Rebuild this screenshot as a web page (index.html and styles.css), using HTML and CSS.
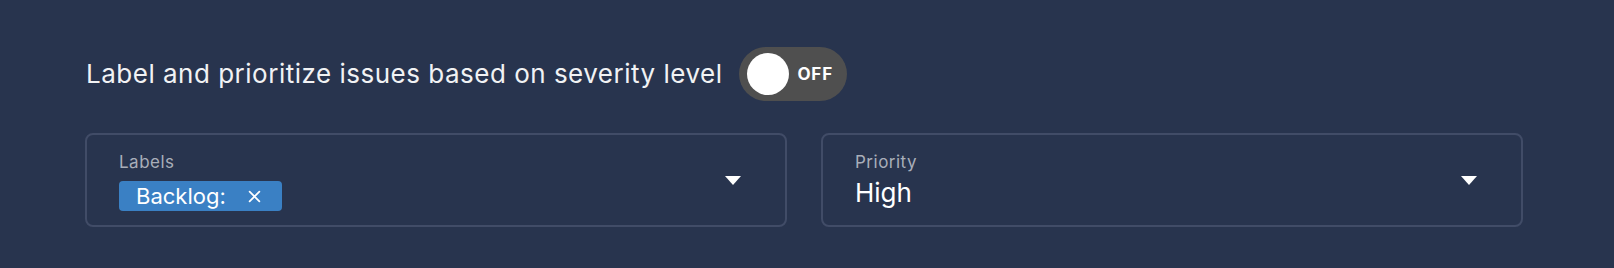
FILE: index.html
```html
<!DOCTYPE html>
<html lang="en">
<head>
<meta charset="utf-8">
<title>Severity settings</title>
<link rel="stylesheet" href="styles.css">
</head>
<body>
<div class="panel">
  <div class="title-row">
    <span class="title">Label and prioritize issues based on severity level</span>
    <button class="toggle" type="button" aria-pressed="false">
      <span class="knob"></span>
      <span class="toggle-text">OFF</span>
    </button>
  </div>
  <div class="fields">
    <div class="field">
      <div class="field-body">
        <div class="field-label">Labels</div>
        <div class="chips">
          <span class="chip">Backlog:
            <svg class="chip-x" viewBox="0 0 12 12" width="13" height="13"><path d="M1.5 1.5 L10.5 10.5 M10.5 1.5 L1.5 10.5" stroke="#fff" stroke-width="1.6" stroke-linecap="round" fill="none"/></svg>
          </span>
        </div>
      </div>
      <span class="caret"></span>
    </div>
    <div class="field">
      <div class="field-body">
        <div class="field-label">Priority</div>
        <div class="value">High</div>
      </div>
      <span class="caret"></span>
    </div>
  </div>
</div>
</body>
</html>
```

FILE: styles.css
```css
html, body {
  margin: 0;
  padding: 0;
  background: #28344e;
  font-family: Inter, "Noto Sans", sans-serif;
  color: #f2f3f5;
}

.panel {
  padding: 47px 91px 0 85px;
}

.title-row {
  display: flex;
  align-items: center;
  gap: 17px;
  padding-left: 1px;
}

.title {
  font-size: 26px;
  line-height: 32px;
  letter-spacing: 0.5px;
  color: #f1f2f4;
}

.toggle {
  display: flex;
  align-items: center;
  width: 108px;
  height: 54px;
  padding: 0 0 0 8px;
  border: none;
  border-radius: 27px;
  background: #4f4f4f;
  box-sizing: border-box;
  font-family: inherit;
}

.knob {
  width: 42px;
  height: 42px;
  border-radius: 50%;
  background: #ffffff;
  flex: none;
}

.toggle-text {
  margin-left: 8px;
  font-size: 17px;
  font-weight: 700;
  color: #ffffff;
  letter-spacing: 0.8px;
}

.fields {
  display: grid;
  grid-template-columns: 1fr 1fr;
  gap: 34px;
  margin-top: 32px;
}

.field {
  height: 94px;
  box-sizing: border-box;
  border: 2px solid #414c67;
  border-radius: 8px;
  display: flex;
  align-items: center;
  padding: 0 44px 0 32px;
}

.field-body {
  flex: 1;
  align-self: flex-start;
  padding-top: 17px;
}

.field-label {
  font-size: 17px;
  line-height: 21px;
  letter-spacing: 0.5px;
  color: #a9aeb9;
}

.chips {
  display: flex;
  margin-top: 8px;
}

.chip {
  display: inline-flex;
  align-items: center;
  height: 30px;
  padding: 0 21px 0 17px;
  background: #3a80c4;
  border-radius: 4px;
  font-size: 22px;
  line-height: 30px;
  color: #ffffff;
}

.chip-x {
  margin-left: 22px;
}

.value {
  margin-top: 5px;
  font-size: 26px;
  line-height: 30px;
  color: #ffffff;
}

.caret {
  width: 0;
  height: 0;
  border-left: 8px solid transparent;
  border-right: 8px solid transparent;
  border-top: 9px solid #ffffff;
  flex: none;
}
```
